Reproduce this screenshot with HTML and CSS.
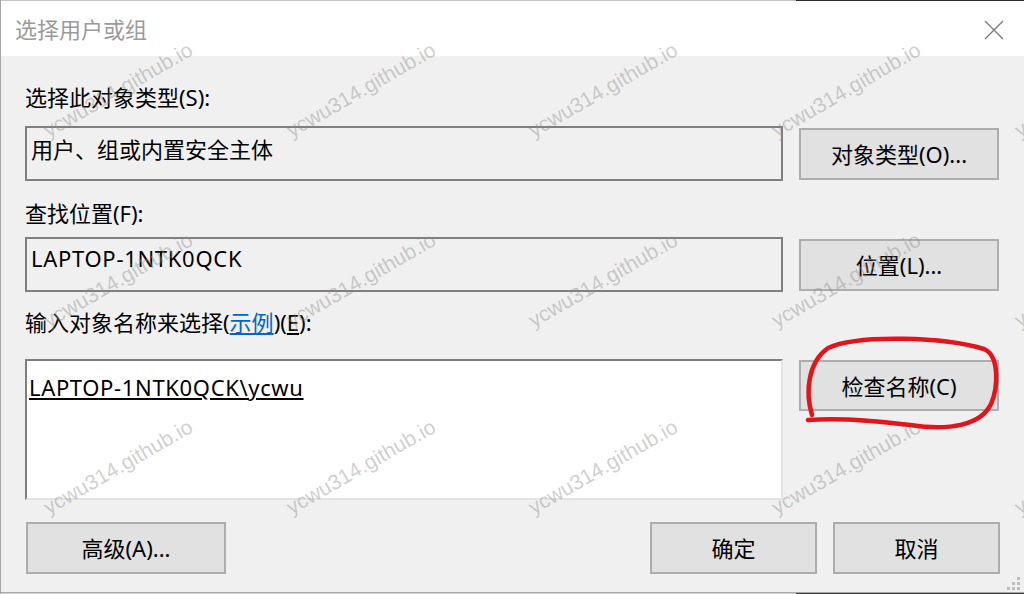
FILE: index.html
```html
<!DOCTYPE html>
<html lang="zh-CN">
<head>
<meta charset="utf-8">
<title>选择用户或组</title>
<link rel="stylesheet" href="styles.css">
</head>
<body>
<div class="window">
  <div class="topline"><span class="topline-light"></span><span class="topline-dark"></span></div>
  <div class="titlebar">
    <span class="title">选择用户或组</span>
    <svg class="close" width="20" height="20" viewBox="0 0 20 20"><path d="M1 1 L19 19 M19 1 L1 19" stroke="#7a7a7a" stroke-width="1.3" fill="none"/></svg>
  </div>
  <div class="content">
    <div class="label label-first">选择此对象类型(S):</div>
    <div class="row">
      <div class="field">用户、组或内置安全主体</div>
      <div class="btn">对象类型(O)...</div>
    </div>
    <div class="label label-second">查找位置(F):</div>
    <div class="row row-second">
      <div class="field field-latin">LAPTOP-1NTK0QCK</div>
      <div class="btn">位置(L)...</div>
    </div>
    <div class="label label-third">输入对象名称来选择(<span class="link">示例</span>)(<u>E</u>):</div>
    <div class="row row-third">
      <div class="textarea"><span class="resolved">LAPTOP-1NTK0QCK\ycwu</span></div>
      <div class="btn btn-top">检查名称(C)</div>
    </div>
    <div class="footer">
      <div class="btn btn-adv">高级(A)...</div>
      <div class="footer-right">
        <div class="btn btn-ok">确定</div>
        <div class="btn btn-ok">取消</div>
      </div>
    </div>
  </div>
  <div class="bottomline"><span class="bottomline-light"></span><span class="bottomline-dark"></span></div>

  <div class="watermarks">
    <span class="wm" style="left:117px;top:90px">ycwu314.github.io</span>
    <span class="wm" style="left:360px;top:90px">ycwu314.github.io</span>
    <span class="wm" style="left:602px;top:90px">ycwu314.github.io</span>
    <span class="wm" style="left:845px;top:90px">ycwu314.github.io</span>
    <span class="wm" style="left:1088px;top:90px">ycwu314.github.io</span>
    <span class="wm" style="left:117px;top:280px">ycwu314.github.io</span>
    <span class="wm" style="left:360px;top:280px">ycwu314.github.io</span>
    <span class="wm" style="left:602px;top:280px">ycwu314.github.io</span>
    <span class="wm" style="left:845px;top:280px">ycwu314.github.io</span>
    <span class="wm" style="left:1088px;top:280px">ycwu314.github.io</span>
    <span class="wm" style="left:117px;top:467px">ycwu314.github.io</span>
    <span class="wm" style="left:360px;top:467px">ycwu314.github.io</span>
    <span class="wm" style="left:602px;top:467px">ycwu314.github.io</span>
    <span class="wm" style="left:845px;top:467px">ycwu314.github.io</span>
    <span class="wm" style="left:1088px;top:467px">ycwu314.github.io</span>
  </div>

  <svg class="annot" width="1024" height="594" viewBox="0 0 1024 594">
    <path d="M812 415 C805 392 808 362 828 348 C858 334 945 337 984 349 C1000 356 998 388 991 404 C981 425 950 431 910 425 C870 420 832 418 808 420" fill="none" stroke="#e3141b" stroke-width="4.5" stroke-linecap="round" stroke-linejoin="round"/>
  </svg>

  <svg class="grip" width="16" height="16" viewBox="0 0 16 16">
    <rect x="11" y="1" width="3" height="3" fill="#bdbdbd"/>
    <rect x="6" y="6" width="3" height="3" fill="#bdbdbd"/>
    <rect x="11" y="6" width="3" height="3" fill="#bdbdbd"/>
    <rect x="1" y="11" width="3" height="3" fill="#bdbdbd"/>
    <rect x="6" y="11" width="3" height="3" fill="#bdbdbd"/>
    <rect x="11" y="11" width="3" height="3" fill="#bdbdbd"/>
  </svg>
</div>
</body>
</html>
```

FILE: styles.css
```css
* { box-sizing: border-box; }

html, body {
  margin: 0;
  padding: 0;
  width: 1024px;
  height: 594px;
  overflow: hidden;
}

body {
  font-family: "Noto Sans", "Noto Sans CJK SC", sans-serif;
  font-size: 22px;
  color: #000;
  background: #f0f0f0;
}

.window {
  position: relative;
  width: 1024px;
  height: 594px;
  display: flex;
  flex-direction: column;
  border-left: 1px solid #a6a6a6;
  background: #f0f0f0;
}

.topline, .bottomline {
  display: flex;
  height: 1px;
  flex: 0 0 auto;
}
.topline-light { width: 795px; background: #c4c4c4; }
.topline-dark { flex: 1; background: #2e2e2e; }

.bottomline { height: 2px; border-top: 1px solid #a6a6a6; }
.bottomline-light { width: 795px; background: #d6d6d6; }
.bottomline-dark { flex: 1; background: #3a3a3a; }

.titlebar {
  height: 55px;
  flex: 0 0 auto;
  background: #fff;
  display: flex;
  align-items: center;
  justify-content: space-between;
  padding: 0 20px 0 14px;
}

.title {
  color: #9a9a9a;
  line-height: 30px;
}

.close { display: block; margin-top: 2px; }

.content {
  flex: 1;
  display: flex;
  flex-direction: column;
  padding: 0 24px 0 24px;
}

.label {
  line-height: 30px;
  height: 30px;
  white-space: nowrap;
}
.label-first { margin-top: 26px; }
.label-second { margin-top: 17px; }
.label-third { margin-top: 15px; }

.link {
  color: #0066cc;
  text-decoration: underline;
}

.row {
  display: flex;
  align-items: center;
  gap: 16px;
  margin-top: 14px;
}
.row-second { margin-top: 9px; }
.row-third { margin-top: 22px; align-items: flex-start; }

.field {
  width: 758px;
  height: 55px;
  border: 2px solid #7f7f7f;
  background: #f0f0f0;
  line-height: 30px;
  padding: 6px 4px 0 4px;
  white-space: nowrap;
}

.field-latin {
  letter-spacing: 0.7px;
  padding-top: 4px;
}

.textarea {
  width: 758px;
  height: 141px;
  border: 2px solid #7f7f7f;
  border-right-color: #e3e3e3;
  border-bottom-color: #e3e3e3;
  background: #fff;
  line-height: 30px;
  padding: 11px 2px 0 2px;
}

.resolved {
  letter-spacing: 0.65px;
  text-decoration: underline;
  text-underline-offset: 2px;
  text-decoration-thickness: 2px;
}

.btn {
  width: 200px;
  height: 52px;
  flex: 0 0 auto;
  border: 2px solid #adadad;
  background: #e1e1e1;
  display: flex;
  align-items: center;
  justify-content: center;
  line-height: 30px;
  white-space: nowrap;
}

.btn-top { margin-top: 1px; height: 51px; }

.footer {
  display: flex;
  justify-content: space-between;
  align-items: flex-start;
  margin-top: 22px;
  padding-left: 1px;
}

.footer-right {
  display: flex;
  gap: 16px;
}

.btn-ok { width: 167px; height: 52px; }

.watermarks {
  position: absolute;
  inset: 0;
  overflow: hidden;
  pointer-events: none;
}

.wm {
  position: absolute;
  transform: translate(-50%, -50%) rotate(-30deg);
  font-family: "Liberation Sans", Arial, sans-serif;
  font-size: 21px;
  color: rgba(140, 140, 140, 0.42);
  white-space: nowrap;
}

.annot {
  position: absolute;
  left: -1px;
  top: 0;
  pointer-events: none;
}

.grip {
  position: absolute;
  left: 1005px;
  top: 576px;
}
```
